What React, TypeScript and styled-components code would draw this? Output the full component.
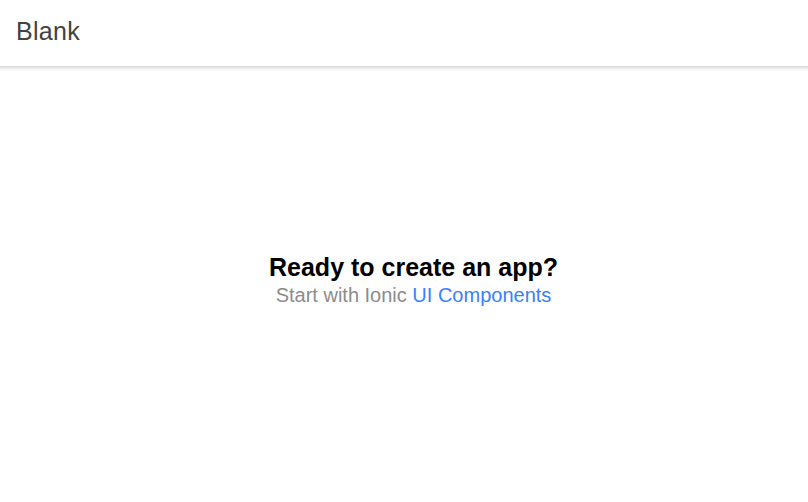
import React from "react";
import styled, { createGlobalStyle } from "styled-components";

const Global = createGlobalStyle`
  html, body { margin: 0; padding: 0; height: 100%; background: #fff; }
  body { font-family: "Liberation Sans", Arial, sans-serif; }
  #root { height: 100%; }
`;

const Page = styled.div`
  display: flex;
  flex-direction: column;
  height: 100vh;
  overflow: hidden;
`;

const Header = styled.header`
  position: relative;
  z-index: 2;
  background: #fff;
  &::after {
    content: "";
    position: absolute;
    left: 0;
    right: 0;
    bottom: -6px;
    height: 6px;
    background: linear-gradient(rgba(0, 0, 0, 0.17), rgba(0, 0, 0, 0.06) 45%, rgba(0, 0, 0, 0));
  }
`;

const Toolbar = styled.div`
  display: flex;
  align-items: center;
  height: 66px;
  padding: 0 16px 3px;
  box-sizing: border-box;
`;

const Title = styled.div`
  font-size: 25px;
  font-weight: 500;
  letter-spacing: 0.0125em;
  color: #424242;
`;

const Content = styled.main`
  flex: 1;
  display: flex;
  align-items: center;
  justify-content: center;
  padding-left: 19px;
`;

const Container = styled.div`
  text-align: center;
  margin-bottom: 8px;
`;

const Heading = styled.strong`
  display: block;
  font-size: 25px;
  line-height: 30px;
  color: #000;
`;

const Sub = styled.p`
  margin: 0;
  font-size: 20px;
  line-height: 26px;
  color: #8c8c8c;
`;

const Link = styled.a`
  color: #3880ff;
  text-decoration: none;
`;

export default function App() {
  return (
    <>
      <Global />
      <Page>
        <Header>
          <Toolbar>
            <Title>Blank</Title>
          </Toolbar>
        </Header>
        <Content>
          <Container>
            <Heading>Ready to create an app?</Heading>
            <Sub>
              Start with Ionic <Link href="#">UI Components</Link>
            </Sub>
          </Container>
        </Content>
      </Page>
    </>
  );
}
